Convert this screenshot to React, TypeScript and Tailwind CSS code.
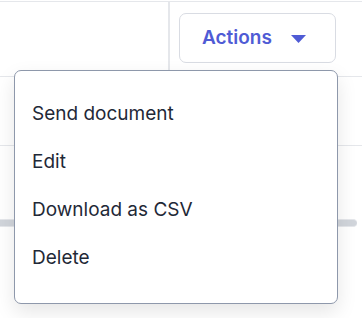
import React from "react";

export default function App() {
  const items = ["Send document", "Edit", "Download as CSV", "Delete"];
  return (
    <div
      className="relative w-[362px] h-[318px] bg-white overflow-hidden"
      style={{ fontFamily: "Inter, 'Noto Sans', sans-serif" }}
    >
      <div className="mt-px border-t border-[#e5e7eb]">
        <div className="flex h-[75px] border-b border-[#e5e7eb]">
          <div className="w-[170px] border-r-2 border-[#e5e7eb]" />
          <div className="flex-1 pl-[9px] pt-[11px]">
            <button className="flex items-center w-[157px] h-[50px] rounded-[7px] border border-[#d9dce3] pl-[22px] text-[19px] font-semibold text-[#4f5bd5]">
              <span>Actions</span>
              <svg className="ml-[19px] mt-[1px]" width="15" height="8" viewBox="0 0 15 8">
                <path d="M0 0 H15 L7.5 8 Z" fill="#4f5bd5" />
              </svg>
            </button>
          </div>
        </div>
        <div className="h-[69px] border-b border-[#e5e7eb]" />
        <div className="mt-[73px] h-[8px] w-[357px] rounded-r-full bg-[#d1d5db] border-y border-[#e5e7eb]" />
      </div>

      <div className="absolute left-[14px] top-[70px] w-[324px] h-[234px] rounded-[7px] border border-[#8e98ab] bg-white shadow-[0_8px_20px_rgba(0,0,0,0.10)] pt-[19px]">
        {items.map((t) => (
          <div
            key={t}
            className="h-12 flex items-center pl-[17px] text-[19px] text-[#1f2937]"
          >
            {t}
          </div>
        ))}
      </div>
    </div>
  );
}
